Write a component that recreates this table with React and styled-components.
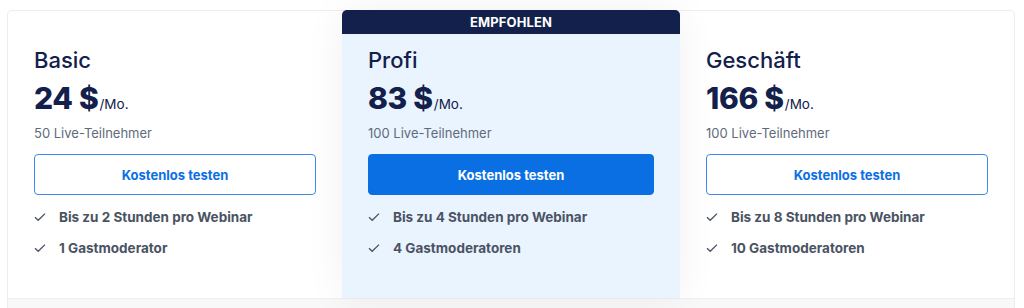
import React from "react";
import styled, { createGlobalStyle } from "styled-components";

const plans = [
  {
    name: "Basic",
    price: "24 $",
    seats: "50 Live-Teilnehmer",
    features: ["Bis zu 2 Stunden pro Webinar", "1 Gastmoderator"]
  },
  {
    name: "Profi",
    price: "83 $",
    seats: "100 Live-Teilnehmer",
    features: ["Bis zu 4 Stunden pro Webinar", "4 Gastmoderatoren"],
    featured: true
  },
  {
    name: "Geschäft",
    price: "166 $",
    seats: "100 Live-Teilnehmer",
    features: ["Bis zu 8 Stunden pro Webinar", "10 Gastmoderatoren"]
  }
];

export default function App() {
  return (
    <React.Fragment>
      <GlobalStyle />
      <Page>
        <Table>
          {plans.map(plan => (
            <Column key={plan.name} featured={plan.featured}>
              {plan.featured ? <Badge>EMPFOHLEN</Badge> : <Spacer />}
              <Body>
                <PlanName>{plan.name}</PlanName>
                <Price>
                  {plan.price}
                  <Per>/Mo.</Per>
                </Price>
                <Seats>{plan.seats}</Seats>
                <TryButton primary={plan.featured}>Kostenlos testen</TryButton>
                <Features>
                  {plan.features.map(f => (
                    <Feature key={f}>
                      <Check viewBox="0 0 12 10">
                        <path d="M1 5.2 L4.2 8.3 L11 1.6" />
                      </Check>
                      {f}
                    </Feature>
                  ))}
                </Features>
              </Body>
            </Column>
          ))}
          <NextRow />
        </Table>
      </Page>
    </React.Fragment>
  );
}

const GlobalStyle = createGlobalStyle`
  body {
    margin: 0;
    background: #ffffff;
    font-family: "Inter", "Lato", sans-serif;
    overflow: hidden;
  }
`;

const Page = styled.div`
  padding: 10px 9px 0 7px;
`;

const Table = styled.div`
  display: grid;
  grid-template-columns: 334px 338px 334px;
  grid-template-rows: 287px 40px;
  border: 1px solid #ededed;
  border-bottom: none;
  border-radius: 5px 5px 0 0;
`;

const Column = styled.div`
  position: relative;
  z-index: ${p => (p.featured ? 2 : 1)};
  background: ${p => (p.featured ? "#eaf4ff" : "transparent")};
  margin-top: ${p => (p.featured ? "-1px" : "0")};
  border-radius: ${p => (p.featured ? "5px 5px 0 0" : "0")};
  box-shadow: ${p => (p.featured ? "0 0 40px rgba(0, 0, 0, 0.06)" : "none")};
  display: flex;
  flex-direction: column;
`;

const Badge = styled.div`
  height: 24px;
  background: #13204b;
  border-radius: 5px 5px 0 0;
  color: #ffffff;
  font-size: 13px;
  font-weight: 700;
  letter-spacing: 0.1px;
  display: flex;
  align-items: center;
  justify-content: center;
`;

const Spacer = styled.div`
  height: 23px;
`;

const Body = styled.div`
  padding: 12px 26px 0 26px;
  display: flex;
  flex-direction: column;
`;

const PlanName = styled.div`
  color: #13204b;
  font-size: 22px;
  font-weight: 500;
  line-height: 28px;
`;

const Price = styled.div`
  margin-top: 6px;
  color: #13204b;
  font-size: 30px;
  font-weight: 800;
  letter-spacing: -0.3px;
  line-height: 36px;
`;

const Per = styled.span`
  font-size: 13.5px;
  font-weight: 400;
  letter-spacing: 0;
  margin-left: 1px;
`;

const Seats = styled.div`
  margin-top: 2px;
  color: #5f6b7c;
  font-size: 13px;
  line-height: 18px;
`;

const TryButton = styled.button`
  margin-top: 12px;
  height: 41px;
  width: 100%;
  border-radius: 4px;
  border: 1px solid ${p => (p.primary ? "#0a6fe3" : "#3d8bea")};
  background: ${p => (p.primary ? "#0a6fe3" : "#ffffff")};
  color: ${p => (p.primary ? "#ffffff" : "#0a6fe3")};
  font-family: inherit;
  font-size: 13px;
  font-weight: 700;
  cursor: pointer;
`;

const Features = styled.ul`
  list-style: none;
  margin: 13px 0 0 0;
  padding: 0;
  display: flex;
  flex-direction: column;
  gap: 13px;
`;

const Feature = styled.li`
  display: flex;
  align-items: center;
  gap: 13px;
  color: #4a5363;
  font-size: 13.5px;
  font-weight: 700;
  line-height: 18px;
`;

const Check = styled.svg`
  width: 12px;
  height: 10px;
  fill: none;
  stroke: #4a5363;
  stroke-width: 1.3;
  flex-shrink: 0;
`;

const NextRow = styled.div`
  grid-column: 1 / -1;
  border-top: 1px solid #eeeeee;
  background: #f8f8f8;
`;
